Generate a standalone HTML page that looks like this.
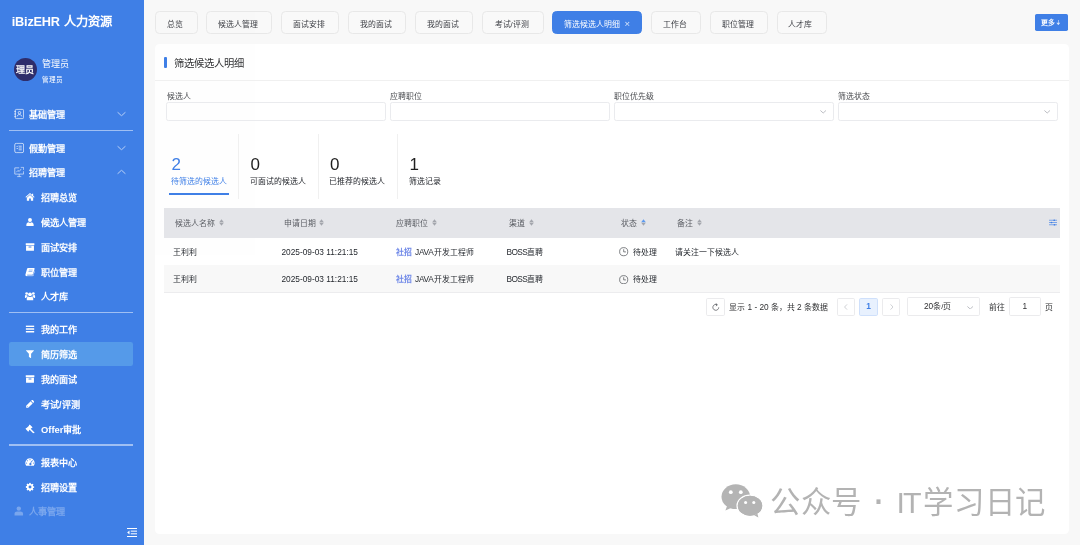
<!DOCTYPE html>
<html lang="zh-CN">
<head>
<meta charset="utf-8">
<title>iBizEHR 人力资源</title>
<style>
*{box-sizing:border-box;margin:0;padding:0}
html,body{width:1080px;height:545px;overflow:hidden;background:#f8f8f8;font-family:"Liberation Sans",sans-serif;color:#303133}
#app{position:relative;width:1080px;height:545px;overflow:hidden;background:#f8f8f8;will-change:transform;opacity:.999}
.abs{position:absolute;white-space:nowrap}
/* ---------- sidebar ---------- */
#side{position:absolute;left:0;top:0;width:144px;height:545px;background:#3f7fe6;color:#fff}
#side .title{position:absolute;left:11.7px;top:10.5px;height:21px;line-height:21px;font-size:12.25px;font-weight:bold;white-space:nowrap}
#side .title b{letter-spacing:-.2px;font-size:12.75px;margin-right:.7px}
#side .avatar{position:absolute;left:13.5px;top:58px;width:23px;height:23px;border-radius:50%;background:#2e2d6b;color:#fff;font-size:9px;font-weight:bold;line-height:24.4px;text-align:center;white-space:nowrap;overflow:hidden}
#side .uname{position:absolute;left:41.6px;top:57.8px;font-size:9px;font-weight:500;line-height:12px;white-space:nowrap}
#side .urole{position:absolute;left:41.8px;top:75px;font-size:6.6px;line-height:9px;white-space:nowrap}
#side .hr{position:absolute;left:9.2px;width:123.6px;height:1.1px;background:rgba(255,255,255,.5)}
.mi{position:absolute;left:9.2px;width:123.6px;height:24.75px;line-height:24.75px;font-size:9.15px;font-weight:bold;white-space:nowrap}
.mi svg{position:absolute;top:50%;transform:translateY(-50%)}
.mi .t{position:absolute;top:1.3px;left:19.9px}
.mi.sub .t{left:31.8px}
.mi.sub svg{left:21px;transform:translate(-50%,-50%)}
.mi.top svg.ic{left:4.9px}
.mi .chev{left:108.2px}
.mi.act{background:#559ae9;border-radius:2.3px;height:23.3px;line-height:23.3px}
.mi.dim{opacity:.3}

/* ---------- tabs ---------- */
.tab{position:absolute;top:11px;height:23px;padding-right:2.6px;line-height:25.6px;border:1px solid #e8e8e8;border-radius:4.5px;background:#f9f9f9;font-size:7.9px;color:#3c3e44;text-align:center;white-space:nowrap;overflow:hidden}
.tab.on{background:#3f7fe6;border-color:#3f7fe6;color:#fff;top:11px;height:22.8px;line-height:25.6px;text-align:left;padding-left:11px}
.tab.on i{position:absolute;left:71.5px;top:-1.3px;font-style:normal;font-size:9.5px;opacity:.8}
#more{position:absolute;left:1035px;top:13.9px;width:32.6px;height:16.9px;line-height:18.5px;background:#3f7fe6;border-radius:1.7px;color:#fff;font-size:6.8px;font-weight:bold;padding-left:6.2px;white-space:nowrap}
#more svg{position:absolute;left:21.1px;top:6.1px}
/* ---------- card ---------- */
#card{position:absolute;left:155px;top:44.3px;width:914px;height:489.6px;background:#fff;border-radius:4.5px}
#card .bar{position:absolute;left:9px;top:12.6px;width:2.8px;height:11.6px;background:#3f7fe6;border-radius:1px}
#card .ttl{position:absolute;left:18.6px;top:12.2px;font-size:10.3px;line-height:15px;color:#303133;white-space:nowrap}
#card .tline{position:absolute;left:0;top:35.9px;width:914px;height:1px;background:#f0f0f0}
.flabel{position:absolute;top:46.3px;font-size:7.9px;line-height:12px;color:#4a4c50;white-space:nowrap}
.finput{position:absolute;top:57.7px;width:219.8px;height:19px;border:1px solid #eaebee;border-radius:2.3px;background:#fff}
.finput svg{position:absolute;right:6.4px;top:7px}
/* stats */
.stat{position:absolute;top:89.7px;height:64.6px}
.stat .n{position:absolute;left:-.5px;top:22px;font-size:17px;line-height:17px;color:#1f1f1f;white-space:nowrap}
.stat .l{position:absolute;left:-1.5px;top:42.1px;font-size:7.9px;line-height:12px;color:#24272d;white-space:nowrap}
.stat.on .n,.stat.on .l{color:#3f7fe6}
.vline{position:absolute;top:89.7px;width:1px;height:64.6px;background:#f0f0f0}
.uline{position:absolute;left:14px;top:149.2px;width:59.5px;height:1.6px;background:#3f7fe6}
/* table */
#thead{position:absolute;left:9.3px;top:163.3px;width:895.7px;height:30.2px;background:#e4e5e9}
.th{position:absolute;top:0;margin-left:-.7px;height:30.2px;line-height:31.4px;font-size:7.9px;color:#5a5d63;white-space:nowrap}
.th svg{position:absolute;top:11.8px}
.tr{position:absolute;left:9.3px;width:895.7px;height:27.4px;line-height:29px;font-size:7.9px;color:#1f2329}
.tr.alt{background:#f8f8f8}
.tr span,.tr svg{position:absolute;white-space:nowrap}
.e{font-size:8.3px}
.tr .tag{color:#7089e8;font-weight:bold}
#tbot{position:absolute;left:9.3px;top:248.1px;width:895.7px;height:1px;background:#ececee}
/* pagination */
.pg{position:absolute;font-size:7.9px;color:#303133;white-space:nowrap;line-height:17.4px}
.pbox{position:absolute;top:254px;height:17.4px;border:1px solid #ebebed;border-radius:1.7px;background:#fff;text-align:center;line-height:15.4px;font-size:7.9px}

/* ---------- watermark ---------- */
#wm{position:absolute;left:720px;top:482px;width:330px;height:38px;color:#b3b3b3;pointer-events:none}
#wm svg{position:absolute;left:0;top:0}
#wm .wt{position:absolute;top:.5px;font-size:30.4px;line-height:38px;font-weight:350;letter-spacing:.6px;white-space:nowrap}
</style>
</head>
<body>
<div id="app">
<div id="side">
  <div class="title"><b>iBizEHR</b> 人力资源</div>
  <div class="avatar">理员</div>
  <div class="uname">管理员</div>
  <div class="urole">管理员</div>
  <div class="mi top" style="top:101.92px"><svg class="ic" width="10.4" height="11" viewBox="0 0 20 21" fill="none" stroke="#fff" stroke-opacity=".9" stroke-width="1.5"><rect x="2.5" y="1.5" width="16" height="18" rx="2.5"/><circle cx="10.5" cy="8" r="2.4"/><path d="M6 15.2c.6-2.6 2.4-3.6 4.5-3.6s3.9 1 4.5 3.6"/><path d="M0.5 5.5h3M0.5 10.5h3M0.5 15.5h3" /></svg><span class="t">基础管理</span><svg class="chev" width="9" height="5" viewBox="0 0 18 10" fill="none" stroke="#fff" stroke-opacity=".85" stroke-width="1.500"><path d="M1 1.200l8 7.400 8-7.400"/></svg></div>
  <div class="hr" style="top:129.85px"></div>
  <div class="mi top" style="top:135.32px"><svg class="ic" width="10.4" height="11" viewBox="0 0 20 21" fill="none" stroke="#fff" stroke-opacity=".9" stroke-width="1.5"><rect x="1.5" y="1.5" width="17" height="18" rx="3"/><path d="M9 7h6M9 10.5h6M9 14h6M5 7l1 1 1.5-1.8M5 11.5h2.5"/></svg><span class="t">假勤管理</span><svg class="chev" width="9" height="5" viewBox="0 0 18 10" fill="none" stroke="#fff" stroke-opacity=".85" stroke-width="1.500"><path d="M1 1.200l8 7.400 8-7.400"/></svg></div>
  <div class="mi top" style="top:160.03px"><svg class="ic" width="10.4" height="11" viewBox="0 0 20 21" fill="none" stroke="#fff" stroke-opacity=".8" stroke-width="1.4"><path d="M10 2.5H1.5v12h17V9"/><path d="M6 19.5h8M10 14.5v5"/><path d="M4.5 11l3-3.5 2.5 2 4-5"/><path d="M13 1.5h5.5v5"/></svg><span class="t">招聘管理</span><svg class="chev" width="9" height="5" viewBox="0 0 18 10" fill="none" stroke="#fff" stroke-opacity=".85" stroke-width="1.500"><path d="M1 8.800l8-7.400 8 7.400"/></svg></div>
  <div class="mi sub" style="top:185.12px"><svg width="9.8" height="9.2" viewBox="0 0 17 16" fill="#fff"><path d="M8.5 1.2L.6 8l1 1.2L8.5 3.4l6.9 5.8 1-1.2-2.4-2.1V2.2h-2v2z"/><path d="M8.5 4.7L3 9.3V14.5h4V10.5h3v4h4V9.3z"/></svg><span class="t">招聘总览</span></div>
  <div class="mi sub" style="top:209.82px"><svg width="8.4" height="9.2" viewBox="0 0 15 16" fill="#fff"><circle cx="7.5" cy="4.3" r="3.5"/><path d="M1 15.2v-2.4C1 10 3.2 8.6 4.8 8.4c.8.6 1.7.9 2.7.9s1.9-.3 2.7-.9c1.6.2 3.8 1.6 3.8 4.4v2.4z"/></svg><span class="t">候选人管理</span></div>
  <div class="mi sub" style="top:234.62px"><svg width="9.4" height="8.8" viewBox="0 0 17 16" fill="#fff"><rect x=".5" y="1" width="16" height="3.6" rx=".5"/><path d="M1.3 5.6h14.4v8.6a.8.8 0 0 1-.8.8H2.1a.8.8 0 0 1-.8-.8zM6.3 7.3a.7.7 0 0 0 0 1.4h4.4a.7.7 0 0 0 0-1.4z" fill-rule="evenodd"/></svg><span class="t">面试安排</span></div>
  <div class="mi sub" style="top:259.23px"><svg width="9.8" height="9" viewBox="0 0 17 16" fill="#fff"><path fill-rule="evenodd" d="M5 .8h10.6c.9 0 1.3.7 1.100 1.500l-2.700 9.3c-.2.800-.9 1.3-1.800 1.3H3.6c-.6 0-.8.500-.3.900.2.200.5.200.9.200h9.400c.4 0 .7-.2.800-.6l2.400-7.900c.3.3.4.800.2 1.3l-2.3 7.6c-.2.800-.9 1.3-1.800 1.3H3.400C1.700 15.700.2 14.400.3 12.800c0-.4.100-.7.3-1.100L3.3 2.3C3.6 1.400 4.200.8 5 .8zM6.700 4l-.3 1.100h6.700l.3-1.100zM6 6.6l-.3 1.100h6.700l.3-1.100z"/></svg><span class="t">职位管理</span></div>
  <div class="mi sub" style="top:284.12px"><svg width="10.8" height="9.2" viewBox="0 0 19 16" fill="#fff"><circle cx="9.5" cy="5" r="3.3"/><circle cx="3.6" cy="3.6" r="2.4"/><circle cx="15.4" cy="3.6" r="2.4"/><path d="M3.8 15.3v-2.6c0-2.3 1.6-3.6 3-3.9.8.6 1.7.9 2.7.9s1.9-.3 2.7-.9c1.4.3 3 1.6 3 3.9v2.6z"/><path d="M.4 8.8C.4 7.2 1.4 6.4 2.3 6.3c.7.5 1.4.6 2 .5.4.8 1 1.4 1.6 1.8-1.4.4-2.6 1.5-3 3H1.6C.8 11.6.4 11 .4 10.2zM18.6 8.8c0-1.6-1-2.4-1.9-2.5-.7.5-1.4.6-2 .5-.4.8-1 1.4-1.6 1.8 1.4.4 2.6 1.5 3 3h1.3c.8 0 1.2-.6 1.2-1.4z"/></svg><span class="t">人才库</span></div>
  <div class="hr" style="top:311.95px"></div>
  <div class="mi sub" style="top:317.12px"><svg width="8.8" height="7.6" viewBox="0 0 16 14" fill="#fff"><rect x="0" y=".6" width="16" height="2.7" rx=".5"/><rect x="0" y="5.65" width="16" height="2.7" rx=".5"/><rect x="0" y="10.7" width="16" height="2.7" rx=".5"/></svg><span class="t">我的工作</span></div>
  <div class="mi sub act" style="top:342.40px"><svg width="8.2" height="8.8" viewBox="0 0 15 16" fill="#fff"><path d="M.9 1h13.2c.6 0 .9.7.5 1.1L9.5 7.4v7.4c0 .6-.6.9-1.1.6L5.9 13.6c-.3-.2-.4-.4-.4-.7V7.4L.4 2.1C0 1.7.3 1 .9 1z"/></svg><span class="t">简历筛选</span></div>
  <div class="mi sub" style="top:366.73px"><svg width="9.4" height="8.8" viewBox="0 0 17 16" fill="#fff"><rect x=".5" y="1" width="16" height="3.6" rx=".5"/><path d="M1.3 5.6h14.4v8.6a.8.8 0 0 1-.8.8H2.1a.8.8 0 0 1-.8-.8zM6.3 7.3a.7.7 0 0 0 0 1.4h4.4a.7.7 0 0 0 0-1.4z" fill-rule="evenodd"/></svg><span class="t">我的面试</span></div>
  <div class="mi sub" style="top:391.73px"><svg width="9" height="9" viewBox="0 0 16 16" fill="#fff"><path d="M11.3 1.1a1.2 1.2 0 0 1 1.7 0l1.9 1.9a1.2 1.2 0 0 1 0 1.7l-1.3 1.3-3.6-3.6zM9.1 3.3l3.6 3.6-7.9 7.9H1.2v-3.6zM3 12.2v.9h.9l.6-.6-1-1z"/></svg><span class="t">考试/评测</span></div>
  <div class="mi sub" style="top:416.52px"><svg width="9.6" height="9.4" viewBox="0 0 17 17" fill="#fff"><path d="M7.2.8a.9.9 0 0 1 1.3 0l4.1 4.1a.9.9 0 0 1 0 1.3l-.5.5a.9.9 0 0 1-1.1.1L9.9 8l6.3 6.3a1.4 1.4 0 0 1-2 2L7.9 10l-1.2 1.2a.9.9 0 0 1-.1 1.1l-.5.5a.9.9 0 0 1-1.3 0L.7 8.7a.9.9 0 0 1 0-1.3l.5-.5a.9.9 0 0 1 1.1-.1l4.4-4.4a.9.9 0 0 1 .1-1.1z"/></svg><span class="t"><span style="font-size:9.4px">Offer</span>审批</span></div>
  <div class="hr" style="top:444.45px"></div>
  <div class="mi sub" style="top:449.73px"><svg width="10.2" height="8.8" viewBox="0 0 18 16" fill="#fff"><path fill-rule="evenodd" d="M9 1.2a8.5 8.5 0 0 1 7.2 13c-.2.4-.6.6-1 .6H2.8c-.4 0-.8-.2-1-.6A8.5 8.5 0 0 1 9 1.2zM9 2.7a1 1 0 1 0 0 2 1 1 0 0 0 0-2zM4.3 4.6a1 1 0 1 0 0 2 1 1 0 0 0 0-2zM2.9 9a1 1 0 1 0 0 2 1 1 0 0 0 0-2zM15.1 9a1 1 0 1 0 0 2 1 1 0 0 0 0-2zM13.7 4.6a1 1 0 1 0 0 2 1 1 0 0 0 0-2zM11.3 5.6l-1.6 4a2 2 0 1 0 1.3.5l1.6-4z"/></svg><span class="t">报表中心</span></div>
  <div class="mi sub" style="top:474.43px"><svg width="9" height="9" viewBox="0 0 16 16" fill="#fff"><path fill-rule="evenodd" d="M6.8.6h2.4l.4 2 1.2.5 1.7-1.1 1.7 1.7-1.1 1.7.5 1.2 2 .4v2.4l-2 .4-.5 1.2 1.1 1.7-1.7 1.7-1.7-1.1-1.2.5-.4 2H6.8l-.4-2-1.2-.5-1.7 1.1-1.7-1.7 1.1-1.7-.5-1.2-2-.4V6.8l2-.4.5-1.2-1.1-1.7 1.7-1.7 1.7 1.1 1.2-.5zM8 5.4a2.6 2.6 0 1 0 0 5.2 2.6 2.6 0 0 0 0-5.2z"/></svg><span class="t">招聘设置</span></div>
  <div class="mi top dim" style="top:499.02px"><svg class="ic" width="9.6" height="10" viewBox="0 0 19 20" fill="#fff"><circle cx="9.5" cy="5.2" r="4.4"/><path d="M1 19v-3.6c0-2.8 2.6-4.6 5.2-4.6h6.6c2.6 0 5.2 1.8 5.2 4.6V19z"/></svg><span class="t">人事管理</span></div>
  <svg class="fold" style="position:absolute;left:127.2px;top:527.8px" width="10" height="9" viewBox="0 0 20 18" fill="#fff"><rect x="0" y="0" width="20" height="2"/><rect x="7.5" y="5.3" width="12.5" height="2"/><rect x="7.5" y="10.6" width="12.5" height="2"/><rect x="0" y="16" width="20" height="2"/><path d="M5 5v8L.3 9z"/></svg>
</div>
<div id="main">
  <div class="tab" style="left:155px;width:43px">总览</div>
  <div class="tab" style="left:206px;width:66px">候选人管理</div>
  <div class="tab" style="left:281px;width:58px">面试安排</div>
  <div class="tab" style="left:348px;width:58px">我的面试</div>
  <div class="tab" style="left:415px;width:58px">我的面试</div>
  <div class="tab" style="left:482px;width:62px">考试/评测</div>
  <div class="tab on" style="left:552px;width:90px">筛选候选人明细<i>×</i></div>
  <div class="tab" style="left:651px;width:50px">工作台</div>
  <div class="tab" style="left:710px;width:58px">职位管理</div>
  <div class="tab" style="left:776.5px;width:50.5px">人才库</div>
  <div id="more">更多<svg width="4.6" height="5.4" viewBox="0 0 9 11" fill="#fff" fill-opacity=".8"><path d="M3.9 0h1.2v5.800h3.300L4.500 10.6.6 5.800h3.300z"/></svg></div>
  <div id="card">
    <div class="bar"></div><div class="ttl">筛选候选人明细</div><div class="tline"></div>
    <div class="flabel" style="left:11.5px">候选人</div><div class="finput" style="left:11.4px"></div>
    <div class="flabel" style="left:235.3px">应聘职位</div><div class="finput" style="left:235.2px"></div>
    <div class="flabel" style="left:459.3px">职位优先级</div><div class="finput" style="left:459.2px"><svg width="6.4" height="3.6" viewBox="0 0 13 7" fill="none" stroke="#9da0a7" stroke-width="1.4"><path d="M.8.8l5.700 5.200L12.200.8"/></svg></div>
    <div class="flabel" style="left:683.3px">筛选状态</div><div class="finput" style="left:683.2px"><svg width="6.4" height="3.6" viewBox="0 0 13 7" fill="none" stroke="#9da0a7" stroke-width="1.4"><path d="M.8.8l5.700 5.200L12.200.8"/></svg></div>
    <div class="stat on" style="left:17px"><div class="n">2</div><div class="l">待筛选的候选人</div></div>
    <div class="stat" style="left:96px"><div class="n">0</div><div class="l">可面试的候选人</div></div>
    <div class="stat" style="left:175.5px"><div class="n">0</div><div class="l">已推荐的候选人</div></div>
    <div class="stat" style="left:255px"><div class="n">1</div><div class="l">筛选记录</div></div>
    <div class="vline" style="left:83px"></div>
    <div class="vline" style="left:163px"></div>
    <div class="vline" style="left:242.2px"></div>
    <div class="uline"></div>
    <div id="thead">
      <div class="th" style="left:11.3px">候选人名称<svg style="left:44px" width="5" height="7" viewBox="0 0 10 14"><path fill="#a3a6ad" d="M5 .6l4.6 5.9H.4z"/><path fill="#a3a6ad" d="M5 13.4L.4 7.500h9.200z"/></svg></div>
      <div class="th" style="left:120.7px">申请日期<svg style="left:35.1px" width="5" height="7" viewBox="0 0 10 14"><path fill="#a3a6ad" d="M5 .6l4.6 5.9H.4z"/><path fill="#a3a6ad" d="M5 13.4L.4 7.500h9.200z"/></svg></div>
      <div class="th" style="left:232.7px">应聘职位<svg style="left:35.6px" width="5" height="7" viewBox="0 0 10 14"><path fill="#a3a6ad" d="M5 .6l4.6 5.9H.4z"/><path fill="#a3a6ad" d="M5 13.4L.4 7.500h9.200z"/></svg></div>
      <div class="th" style="left:345.5px">渠道<svg style="left:19.6px" width="5" height="7" viewBox="0 0 10 14"><path fill="#a3a6ad" d="M5 .6l4.6 5.9H.4z"/><path fill="#a3a6ad" d="M5 13.4L.4 7.500h9.200z"/></svg></div>
      <div class="th" style="left:457.7px">状态<svg style="left:19.6px" width="5" height="7" viewBox="0 0 10 14"><path fill="#5b9af0" d="M5 .6l4.6 5.9H.4z"/><path fill="#a3a6ad" d="M5 13.4L.4 7.500h9.200z"/></svg></div>
      <div class="th" style="left:513.7px">备注<svg style="left:20.2px" width="5" height="7" viewBox="0 0 10 14"><path fill="#a3a6ad" d="M5 .6l4.6 5.9H.4z"/><path fill="#a3a6ad" d="M5 13.4L.4 7.500h9.200z"/></svg></div>
      <svg style="position:absolute;left:885px;top:11.2px" width="8" height="7" viewBox="0 0 16 14" fill="none" stroke="#3f7fe6" stroke-width="1.3"><path d="M0 2.5h16M0 7h16M0 11.5h16"/><circle cx="10.5" cy="2.5" r="1.7" fill="#3f7fe6" stroke="none"/><circle cx="5" cy="7" r="1.7" fill="#3f7fe6" stroke="none"/><circle cx="11" cy="11.5" r="1.7" fill="#3f7fe6" stroke="none"/></svg>
    </div>
    <div class="tr" style="top:193.5px"><span style="left:9px">王利利</span><span class="e" style="left:117.2px">2025-09-03 11:21:15</span><span class="tag" style="left:232.2px">社招</span><span style="left:250.7px"><span class="e" style="position:static;letter-spacing:-.25px">JAVA</span>开发工程师</span><span style="left:342.2px"><span class="e" style="position:static;letter-spacing:-.55px">BOSS</span>直聘</span><svg style="left:454.9px;top:9.4px" width="9.4" height="9.4" viewBox="0 0 18 18" fill="none" stroke="#44474d" stroke-width="1.3"><circle cx="9" cy="9" r="7.8"/><path d="M9 4.3V9.4h4.3"/></svg><span style="left:469px">待处理</span><span style="left:510.7px">请关注一下候选人</span></div>
    <div class="tr alt" style="top:220.9px"><span style="left:9px">王利利</span><span class="e" style="left:117.2px">2025-09-03 11:21:15</span><span class="tag" style="left:232.2px">社招</span><span style="left:250.7px"><span class="e" style="position:static;letter-spacing:-.25px">JAVA</span>开发工程师</span><span style="left:342.2px"><span class="e" style="position:static;letter-spacing:-.55px">BOSS</span>直聘</span><svg style="left:454.9px;top:9.4px" width="9.4" height="9.4" viewBox="0 0 18 18" fill="none" stroke="#44474d" stroke-width="1.3"><circle cx="9" cy="9" r="7.8"/><path d="M9 4.3V9.4h4.3"/></svg><span style="left:469px">待处理</span></div>
    <div id="tbot"></div>
    <div class="pbox" style="left:551.3px;width:19px"><svg style="position:absolute;left:5.2px;top:3.8px" width="7.6" height="8.2" viewBox="0 0 14 15" fill="none" stroke="#44474d" stroke-width="1.3"><path d="M9.5 3.200A5.400 5.400 0 1 0 12.400 8"/><path d="M6.800.6l3 2.600-2.600 2.600"/></svg></div>
    <div class="pg" style="left:574.3px;top:254.3px">显示 <span class="e">1 - 20</span> 条，共 <span class="e">2</span> 条数据</div>
    <div class="pbox" style="left:682.4px;width:17.4px"><svg style="position:absolute;left:6px;top:5.2px" width="3.6" height="6" viewBox="0 0 7 12" fill="none" stroke="#b4b7bd" stroke-width="1.3"><path d="M6 .8L1 6l5 5.2"/></svg></div>
    <div class="pbox" style="left:704.3px;width:18.4px;background:#e8f1fe;border-color:#cfe0fb;color:#3f7fe6;font-weight:bold;font-size:8.4px">1</div>
    <div class="pbox" style="left:727.4px;width:17.4px"><svg style="position:absolute;left:6.4px;top:5.2px" width="3.6" height="6" viewBox="0 0 7 12" fill="none" stroke="#b4b7bd" stroke-width="1.3"><path d="M1 .8L6 6l-5 5.2"/></svg></div>
    <div class="pbox" style="left:752px;top:253.2px;width:72.8px;height:19px;line-height:17px;text-align:left;padding-left:16px"><span class="e">20</span>条/页<svg style="position:absolute;left:58.5px;top:7.2px" width="6.4" height="3.6" viewBox="0 0 13 7" fill="none" stroke="#9da0a7" stroke-width="1.4"><path d="M.8.8l5.700 5.200L12.200.8"/></svg></div>
    <div class="pg" style="left:833.7px;top:254.3px">前往</div>
    <div class="pbox" style="left:854.2px;top:253.2px;width:31.4px;height:19px;line-height:17px"><span class="e">1</span></div>
    <div class="pg" style="left:890px;top:254.3px">页</div>
  </div>
</div>
<div id="wm">
  <svg width="44" height="38" viewBox="0 0 44 38">
    <g fill="#b4b4b4">
      <ellipse cx="15.8" cy="14.7" rx="14.3" ry="12.4"/>
      <path d="M7.2 23.5L5.4 28.6 11.8 25.6z"/>
      <ellipse cx="30" cy="23.8" rx="12.9" ry="10.7" stroke="#fff" stroke-width="1.4"/>
      <path d="M34.2 33.2L38.4 35.4 37.4 31.4z"/>
      <ellipse cx="30" cy="23.8" rx="12.2" ry="10"/>
    </g>
    <g fill="#fff">
      <circle cx="10.8" cy="10.2" r="1.9"/><circle cx="20.8" cy="10.2" r="1.9"/>
      <circle cx="25.6" cy="20.5" r="1.55"/><circle cx="33.8" cy="20.5" r="1.55"/>
    </g>
  </svg>
  <div class="wt" style="left:49.7px;letter-spacing:.9px">公众号</div><div class="wt" style="left:151.6px;top:-2.4px;letter-spacing:0;font-size:42px;font-weight:400">·</div><div class="wt" style="left:176.4px;letter-spacing:-1.9px">IT</div><div class="wt" style="left:203.4px">学习日记</div>
</div>
</div>
</body>
</html>
